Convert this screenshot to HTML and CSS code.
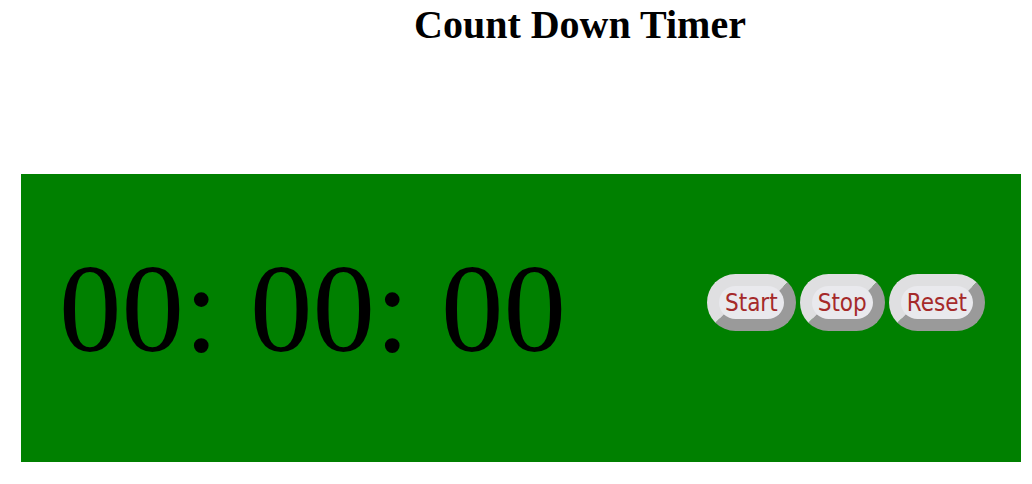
FILE: index.html
```html
<!DOCTYPE html>
<html>
<head>
<meta charset="utf-8">
<title>Count Down Timer</title>
<link rel="stylesheet" href="styles.css">
</head>
<body>
<h1 class="title">Count Down Timer</h1>
<div class="timer-box">
  <div class="display">00: 00: 00</div>
  <div class="controls">
    <button class="btn">Start</button>
    <button class="btn">Stop</button>
    <button class="btn">Reset</button>
  </div>
</div>
</body>
</html>
```
FILE: styles.css
```css
html, body {
  margin: 0;
  padding: 0;
  background: #ffffff;
}
body {
  font-family: "Liberation Serif", "Times New Roman", serif;
}
.title {
  margin: 2px 0 0 414px;
  font-size: 40px;
  font-weight: bold;
  line-height: 46px;
  color: #000;
}
.timer-box {
  box-sizing: border-box;
  margin: 126px 0 0 21px;
  width: 1000px;
  height: 288px;
  background: #008000;
  display: flex;
  justify-content: space-between;
  align-items: flex-start;
  padding: 0 36px 0 38px;
}
.display {
  margin-top: 73px;
  font-size: 125px;
  line-height: 125px;
  color: #000;
  white-space: pre;
}
.controls {
  margin-top: 100px;
  display: flex;
  gap: 4px;
}
.btn {
  box-sizing: border-box;
  height: 57px;
  margin: 0;
  padding: 1px 6px 0;
  border: 12px solid;
  border-color: #dfdfe1 #9a9a9a #9a9a9a #dfdfe1;
  border-radius: 30px;
  background: #e9e9ed;
  color: #a52a2a;
  font-family: "DejaVu Sans Condensed", "DejaVu Sans", sans-serif;
  font-stretch: condensed;
  font-size: 24px;
  line-height: 32px;
}
```
